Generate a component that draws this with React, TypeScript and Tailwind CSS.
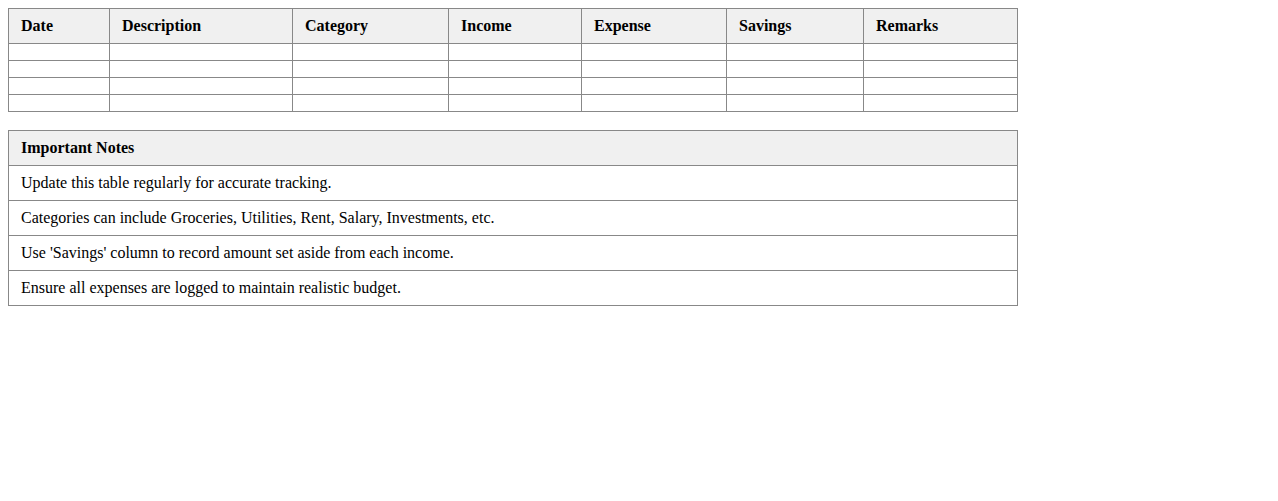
import React from "react";

const cols = [
  { name: "Date", w: "w-[101px]" },
  { name: "Description", w: "w-[183px]" },
  { name: "Category", w: "w-[156px]" },
  { name: "Income", w: "w-[133px]" },
  { name: "Expense", w: "w-[145px]" },
  { name: "Savings", w: "w-[137px]" },
  { name: "Remarks", w: "w-[154px]" },
];

const notes = [
  "Update this table regularly for accurate tracking.",
  "Categories can include Groceries, Utilities, Rent, Salary, Investments, etc.",
  "Use 'Savings' column to record amount set aside from each income.",
  "Ensure all expenses are logged to maintain realistic budget.",
];

export default function App() {
  return (
    <div className="min-h-[501px] bg-white p-2 text-black font-['Liberation_Serif','Times_New_Roman',serif] text-[16px] leading-[18px]">
      <table className="w-[1010px] table-fixed border-collapse">
        <thead>
          <tr>
            {cols.map((c) => (
              <th
                key={c.name}
                className={`${c.w} border border-[#888] bg-[#f0f0f0] px-3 py-2 text-left font-bold`}
              >
                {c.name}
              </th>
            ))}
          </tr>
        </thead>
        <tbody>
          {[0, 1, 2, 3].map((r) => (
            <tr key={r}>
              {cols.map((c) => (
                <td key={c.name} className="border border-[#888] px-3 py-2"></td>
              ))}
            </tr>
          ))}
        </tbody>
      </table>
      <table className="mt-[18px] w-[1010px] border-collapse">
        <thead>
          <tr>
            <th className="border border-[#888] bg-[#f0f0f0] px-3 py-2 text-left font-bold">
              Important Notes
            </th>
          </tr>
        </thead>
        <tbody>
          {notes.map((n) => (
            <tr key={n}>
              <td className="border border-[#888] px-3 py-2">{n}</td>
            </tr>
          ))}
        </tbody>
      </table>
    </div>
  );
}
